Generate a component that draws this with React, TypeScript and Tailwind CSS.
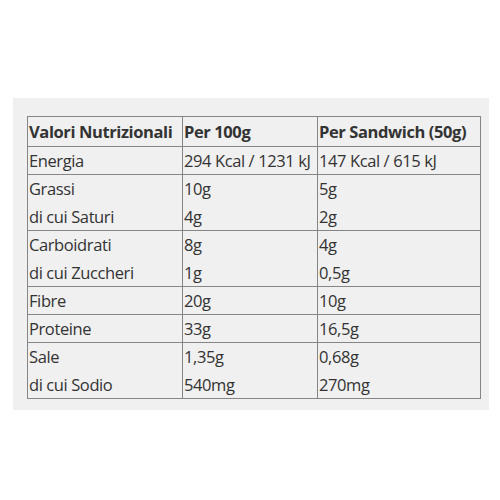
import React from "react";

const rows: { left: string[]; a: string[]; b: string[] }[] = [
  { left: ["Energia"], a: ["294 Kcal / 1231 kJ"], b: ["147 Kcal / 615 kJ"] },
  { left: ["Grassi", "di cui Saturi"], a: ["10g", "4g"], b: ["5g", "2g"] },
  { left: ["Carboidrati", "di cui Zuccheri"], a: ["8g", "1g"], b: ["4g", "0,5g"] },
  { left: ["Fibre"], a: ["20g"], b: ["10g"] },
  { left: ["Proteine"], a: ["33g"], b: ["16,5g"] },
  { left: ["Sale", "di cui Sodio"], a: ["1,35g", "540mg"], b: ["0,68g", "270mg"] },
];

function Cell({ lines }: { lines: string[] }) {
  return (
    <td className="border border-[#858585] px-[1px] py-0 align-top whitespace-nowrap overflow-hidden">
      {lines.map((l, i) => (
        <div key={i} className={i === lines.length - 1 ? "h-[27px] leading-[27px]" : "h-[28px] leading-[27px]"}>
          {l}
        </div>
      ))}
    </td>
  );
}

export default function App() {
  return (
    <div className="w-[500px] h-[500px] bg-white pt-[98px] pl-[13px]">
      <div
        className="w-[476px] h-[312px] bg-[#f0f0f0] pt-[18px] pl-[14px] text-[#333333] text-[16.5px] tracking-[-0.4px]"
        style={{ fontFamily: '"Open Sans", "Noto Sans", sans-serif' }}
      >
        <table className="border-collapse table-fixed w-[453px]">
          <colgroup>
            <col className="w-[155px]" />
            <col className="w-[135px]" />
            <col className="w-[163px]" />
          </colgroup>
          <thead>
            <tr>
              <th className="border border-[#858585] px-[1px] text-left font-bold whitespace-nowrap overflow-hidden h-[30px] leading-[29px] p-0">Valori Nutrizionali</th>
              <th className="border border-[#858585] px-[1px] text-left font-bold whitespace-nowrap overflow-hidden h-[30px] leading-[29px] p-0">Per 100g</th>
              <th className="border border-[#858585] px-[1px] text-left font-bold whitespace-nowrap overflow-hidden h-[30px] leading-[29px] p-0">Per Sandwich (50g)</th>
            </tr>
          </thead>
          <tbody>
            {rows.map((r, i) => (
              <tr key={i}>
                <Cell lines={r.left} />
                <Cell lines={r.a} />
                <Cell lines={r.b} />
              </tr>
            ))}
          </tbody>
        </table>
      </div>
    </div>
  );
}
